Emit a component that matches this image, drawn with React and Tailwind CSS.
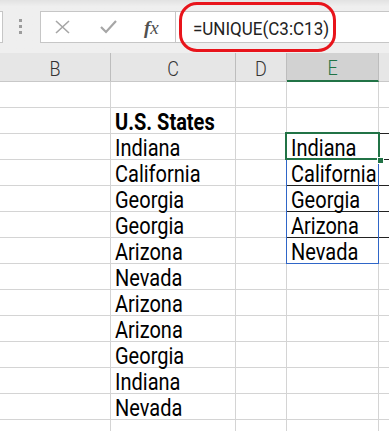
import React from "react";

const cols = [
  { key: "B", w: "w-[111px]" },
  { key: "C", w: "w-[125px]" },
  { key: "D", w: "w-[51px]" },
  { key: "E", w: "w-[92px]" },
];

const colC = [
  "",
  "U.S. States",
  "Indiana",
  "California",
  "Georgia",
  "Georgia",
  "Arizona",
  "Nevada",
  "Arizona",
  "Arizona",
  "Georgia",
  "Indiana",
  "Nevada",
  "",
];

const colE = ["", "", "Indiana", "California", "Georgia", "Arizona", "Nevada"];

function Toolbar() {
  return (
    <div className="h-[53px] bg-gradient-to-b from-[#e2e2e2] to-[#efefef] to-[12%] relative flex items-start">
      {/* name box edge */}
      <div className="mt-[11px] h-[32px] w-[3px] bg-white border-y border-r border-[#c6c6c6]" />
      {/* grip dots */}
      <div className="ml-[16px] mt-[19px] flex flex-col gap-[3px]">
        <div className="w-[3px] h-[3px] bg-[#9c9c9c]" />
        <div className="w-[3px] h-[3px] bg-[#9c9c9c]" />
        <div className="w-[3px] h-[3px] bg-[#9c9c9c]" />
      </div>
      {/* cancel / enter / fx */}
      <div className="ml-[18px] mt-[11px] h-[32px] w-[136px] bg-white border border-[#c6c6c6] flex items-center">
        <svg className="ml-[13px]" width="17" height="14" viewBox="0 0 17 14">
          <path d="M2 1 L15 13 M15 1 L2 13" stroke="#a6a6a6" strokeWidth="1.6" fill="none" />
        </svg>
        <svg className="ml-[29px]" width="17" height="14" viewBox="0 0 17 14">
          <path d="M1 7 L6 12 L16 1" stroke="#a6a6a6" strokeWidth="2.2" fill="none" />
        </svg>
        <span className="ml-[27px] text-[19px] italic text-[#505050] leading-none font-['Liberation_Serif',serif]">
          <span className="font-bold">f</span>x
        </span>
      </div>
      {/* formula input */}
      <div className="mt-[11px] h-[32px] flex-1 bg-white border-y border-[#c6c6c6] relative">
        <div className="absolute left-[3px] top-[-10px] w-[157px] h-[50px] border-[3px] border-[#e8141b] rounded-[18px]" />
        <div className="pl-[17px] pt-[4px] text-[17px] text-[#222] font-['Roboto',sans-serif]">
          <span className="inline-block scale-y-[1.1]">=UNIQUE(C3:C13)</span>
        </div>
      </div>
    </div>
  );
}

function Header() {
  return (
    <div className="flex h-[29px] bg-[#e6e6e6] border-b border-[#c8c8c8] font-['Roboto',sans-serif] text-[18px] font-light text-[#333]">
      {cols.map((c) => (
        <div
          key={c.key}
          className={
            c.key === "E"
              ? `${c.w} shrink-0 flex items-center justify-center bg-[#d2d2d2] text-[#217346] border-r border-[#bdbdbd] border-b-2 border-b-[#217346] -mb-px`
              : `${c.w} shrink-0 flex items-center justify-center border-r border-[#bdbdbd]`
          }
        >
          <span className="inline-block scale-y-[1.17] translate-y-[1px]">{c.key}</span>
        </div>
      ))}
      <div className="flex-1" />
    </div>
  );
}

function Row({ i }) {
  const c = colC[i];
  const e = colE[i] || "";
  const dark = i >= 1 && i <= 5;
  const lineE = dark ? "border-b-[#222]" : "border-b-[#d4d4d4]";
  return (
    <div className="flex h-[26px] text-[20px] leading-[26px] text-black font-['Roboto',sans-serif]">
      <div className="w-[111px] shrink-0 border-r border-b border-[#d4d4d4]" />
      <div
        className={`w-[125px] shrink-0 border-r border-b border-[#d4d4d4] pl-[4px] whitespace-nowrap ${
          i === 1 ? "font-bold" : ""
        }`}
      >
        <span className="inline-block scale-y-[1.17] translate-y-[1px] origin-center">{c}</span>
      </div>
      <div className="w-[51px] shrink-0 border-r border-b border-[#d4d4d4]" />
      <div className={`w-[92px] shrink-0 border-r border-b border-[#d4d4d4] ${lineE} pl-[4px] whitespace-nowrap`}>
        <span className="inline-block scale-y-[1.17] translate-y-[1px] origin-center">{e}</span>
      </div>
      <div className={`flex-1 border-b border-[#d4d4d4] ${lineE}`} />
    </div>
  );
}

export default function App() {
  return (
    <div className="w-[389px] h-[431px] overflow-hidden bg-white relative">
      <Toolbar />
      <Header />
      <div className="relative">
        {colC.map((_, i) => (
          <Row key={i} i={i} />
        ))}
        {/* spill range */}
        <div className="absolute left-[286px] top-[51px] w-[93px] h-[131px] border border-[#2f66c8] pointer-events-none" />
        {/* active cell */}
        <div className="absolute left-[285px] top-[50px] w-[95px] h-[28px] border-2 border-[#217346] pointer-events-none" />
        <div className="absolute left-[377px] top-[75px] w-[5px] h-[5px] bg-[#217346] border border-white box-content pointer-events-none" />
      </div>
    </div>
  );
}
